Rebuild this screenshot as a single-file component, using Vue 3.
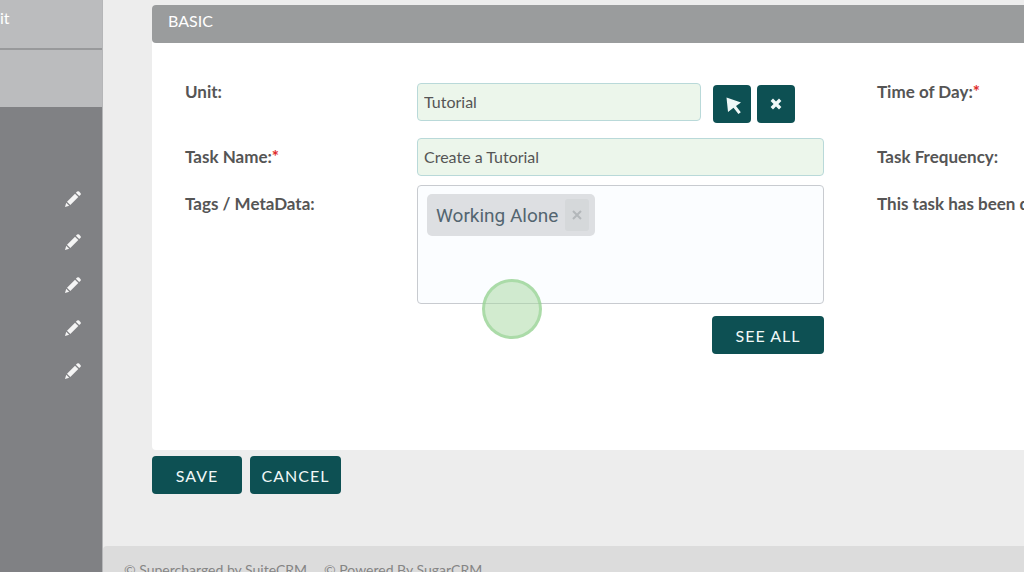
<template>
    <div class="page">
        <aside class="sidebar">
            <div class="side-title">it</div>
            <div class="side-block"></div>
            <ul class="side-list">
                <li v-for="n in 5" :key="n">
                    <button type="button" class="edit" aria-label="Edit">
                        <svg viewBox="0 0 16 16" width="16" height="16">
                            <path d="M0 16l1.2-4.2 3 3z" />
                            <path d="M2 10.7l8-8 3.3 3.3-8 8z" />
                            <path d="M10.9 1.8l1.2-1.2q1-.9 2 0l1.3 1.3q.9 1 0 2l-1.2 1.2z" />
                        </svg>
                    </button>
                </li>
            </ul>
        </aside>

        <main class="main">
            <form class="form" @submit.prevent>
                <section class="panel">
                    <h2 class="panel-head">BASIC</h2>
                    <div class="panel-body">
                        <div class="row">
                            <label class="label" for="unit">Unit:</label>
                            <div class="field unit">
                                <input id="unit" v-model="unit" type="text" class="input">
                                <button type="button" class="btn icon" aria-label="Select">
                                    <svg viewBox="0 0 16 18" width="16" height="18">
                                        <path d="M.5 .5l14.5 5-5 3.4 4.8 6.3-2.4 1.9-4.9-6.3L2 15z" />
                                    </svg>
                                </button>
                                <button type="button" class="btn icon" aria-label="Clear" @click="unit = ''">
                                    <svg viewBox="0 0 12 12" width="12" height="12">
                                        <path d="M1.8 1.8l8.4 8.4M10.2 1.8l-8.4 8.4" class="cross" />
                                    </svg>
                                </button>
                            </div>
                            <div class="label side">Time of Day:<span class="required">*</span></div>
                        </div>

                        <div class="row">
                            <label class="label" for="task">Task Name:<span class="required">*</span></label>
                            <div class="field">
                                <input id="task" v-model="task" type="text" class="input">
                            </div>
                            <div class="label side">Task Frequency:</div>
                        </div>

                        <div class="row tags-row">
                            <div class="label">Tags / MetaData:</div>
                            <div class="field">
                                <div class="tags">
                                    <span v-for="tag in tags" :key="tag" class="tag">
                                        {{ tag }}
                                        <button type="button" class="remove" aria-label="Remove" @click="removeTag(tag)">
                                            <svg viewBox="0 0 10 10" width="10" height="10">
                                                <path d="M1 1l8 8M9 1l-8 8" />
                                            </svg>
                                        </button>
                                    </span>
                                    <span class="pointer"></span>
                                </div>
                                <button type="button" class="btn see-all">SEE ALL</button>
                            </div>
                            <div class="label side">This task has been d</div>
                        </div>
                    </div>
                </section>

                <div class="actions">
                    <button type="submit" class="btn save">SAVE</button>
                    <button type="button" class="btn cancel">CANCEL</button>
                </div>
            </form>

            <footer class="footer">
                <a href="#">© Supercharged by SuiteCRM</a>
                <a href="#">© Powered By SugarCRM</a>
            </footer>
        </main>
    </div>
</template>

<script setup>
import { ref } from 'vue'

const unit = ref('Tutorial')
const task = ref('Create a Tutorial')
const tags = ref(['Working Alone'])

function removeTag(tag) {
    tags.value = tags.value.filter(t => t !== tag)
}
</script>

<style>
body {
    background: #ededed;
    overflow: hidden;
}
</style>

<style scoped>
* {
    box-sizing: border-box;
}

.page {
    display: flex;
    min-height: 100vh;
    font-family: Lato, "Liberation Sans", sans-serif;
    font-size: 16px;
    color: #555;
    text-rendering: optimizeLegibility;
}

/* Sidebar */
.sidebar {
    flex: 0 0 103px;
    background: #808184;
    border-right: 1px solid #b5b6b8;
}

.side-title {
    height: 50px;
    padding-top: 8px;
    background: #bbbcbe;
    border-bottom: 2px solid #98999b;
    color: #fff;
    line-height: 20px;
}

.side-block {
    height: 57px;
    background: #bbbcbe;
}

.side-list {
    margin: 0;
    padding: 70px 21px 0 0;
    list-style: none;
}

.side-list li {
    display: flex;
    justify-content: flex-end;
    align-items: center;
    height: 43px;
}

.edit {
    display: flex;
    padding: 0;
    border: 0;
    background: none;
    fill: #f5f5f5;
    cursor: pointer;
}

/* Panel */
.main {
    flex: 1;
    min-width: 0;
    display: flex;
    flex-direction: column;
}

.form {
    padding: 5px 0 52px 49px;
}

.panel {
    overflow: hidden;
    border-radius: 4px 0 0 4px;
    background: #fff;
}

.panel-head {
    margin: 0;
    padding: 6px 16px 12px;
    border-radius: 0 0 0 4px;
    background: #9a9c9d;
    color: #fff;
    font-size: 16px;
    font-weight: 400;
    line-height: 20px;
}

.panel-body {
    padding: 40px 0 96px 33px;
}

.row {
    display: grid;
    grid-template-columns: 232px minmax(200px, 407px) minmax(0, 1fr);
    align-items: start;
    margin-bottom: 15px;
}

.row + .row {
    margin-bottom: 9px;
}

.row + .row .label {
    padding-top: 10px;
}

.row.tags-row {
    margin-bottom: 0;
}

.label {
    font-size: 17px;
    font-weight: 700;
    line-height: 18px;
    white-space: nowrap;
}

.label.side {
    padding-left: 53px;
}

.required {
    color: #e02b2b;
}

.field {
    display: flex;
    flex-direction: column;
}

.unit {
    flex-direction: row;
    align-items: flex-start;
    padding-right: 29px;
}

.input {
    flex: 1;
    min-width: 0;
    width: 100%;
    min-height: 38px;
    padding: 0 6px 2px;
    border: 1px solid #b9d9d9;
    border-radius: 4px;
    background: #ecf6eb;
    color: #555;
    font-family: inherit;
    font-size: 16px;
    text-rendering: inherit;
}

.btn {
    height: 38px;
    padding: 0;
    border: 0;
    border-radius: 4px;
    background: #0d5053;
    color: #f0f8f8;
    font-family: inherit;
    font-size: 16px;
    letter-spacing: 1px;
    cursor: pointer;
}

.icon {
    display: flex;
    justify-content: center;
    align-items: center;
    width: 38px;
    margin: 2px 0 0 6px;
    fill: #f0f8f8;
}

.input + .icon {
    margin-left: 12px;
    padding: 4px 0 0 4px;
}

.cross {
    stroke: #f0f8f8;
    stroke-width: 3.4;
}

.tags {
    position: relative;
    height: 119px;
    padding: 8px 9px;
    border: 1px solid #c8cbd0;
    border-radius: 4px;
    background: #fbfdff;
}

.tag {
    display: inline-flex;
    align-items: center;
    gap: 7px;
    height: 42px;
    padding: 0 6px 0 9px;
    border-radius: 5px;
    background: #dddfe2;
    color: #536570;
    font-family: Roboto, sans-serif;
    font-size: 19px;
}

.remove {
    display: flex;
    justify-content: center;
    align-items: center;
    width: 24px;
    height: 32px;
    padding: 0;
    border: 0;
    border-radius: 3px;
    background: #d5d8da;
    stroke: #b3b7ba;
    stroke-width: 2;
    cursor: pointer;
}

/* Click highlight over the tag box edge */
.pointer {
    position: absolute;
    top: 93px;
    left: 64px;
    width: 60px;
    height: 60px;
    border: 3px solid rgba(145, 208, 141, 0.6);
    border-radius: 50%;
    background: rgba(165, 215, 160, 0.5);
}

.see-all {
    align-self: flex-end;
    width: 112px;
    margin-top: 12px;
}

.actions {
    display: flex;
    gap: 8px;
    margin-top: 6px;
}

.save {
    width: 90px;
}

.cancel {
    width: 91px;
}

/* Footer */
.footer {
    flex: 1;
    display: flex;
    gap: 17px;
    padding: 14px 21px;
    border-top-left-radius: 4px;
    background: #dcdcdc;
    font-size: 14px;
    line-height: 20px;
}

.footer a {
    color: #858585;
    text-decoration: none;
}
</style>
